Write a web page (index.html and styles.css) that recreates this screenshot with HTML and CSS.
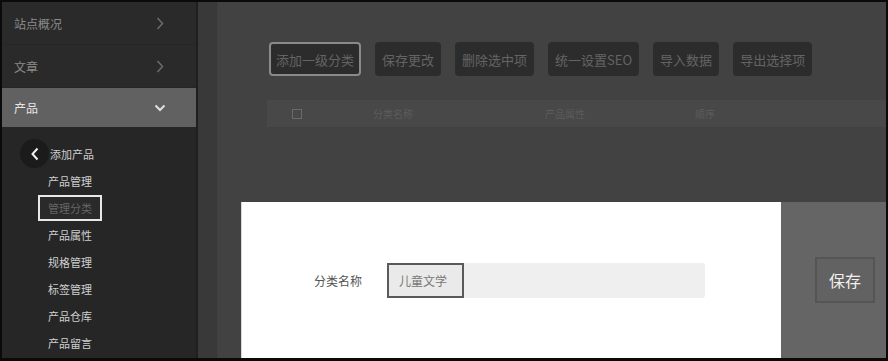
FILE: index.html
```html
<!DOCTYPE html>
<html lang="zh-CN">
<head>
    <meta charset="UTF-8">
    <title>管理分类</title>
    <link rel="stylesheet" href="styles.css">
</head>
<body>
    <div class="frame">
        <div class="sidebar">
            <div class="nav-item">
                <span>站点概况</span>
                <svg class="nav-arrow" width="8" height="13" viewBox="0 0 8 13">
                    <path d="M1.5 1 L6.5 6.5 L1.5 12" fill="none" stroke="#6c6c6c" stroke-width="1.5"/>
                </svg>
            </div>
            <div class="nav-item">
                <span>文章</span>
                <svg class="nav-arrow" width="8" height="13" viewBox="0 0 8 13">
                    <path d="M1.5 1 L6.5 6.5 L1.5 12" fill="none" stroke="#6c6c6c" stroke-width="1.5"/>
                </svg>
            </div>
            <div class="nav-item active">
                <span>产品</span>
                <svg class="nav-caret" width="12" height="8" viewBox="0 0 12 8">
                    <path d="M1.5 1.5 L6 6 L10.5 1.5" fill="none" stroke="#e0e0e0" stroke-width="2"/>
                </svg>
            </div>
            <div class="sub-menu">
                <div class="sub-item first">
                    <span class="back-btn">
                        <svg width="10" height="14" viewBox="0 0 10 14">
                            <path d="M7.5 1.5 L2.5 7 L7.5 12.5" fill="none" stroke="#f0f0f0" stroke-width="2"/>
                        </svg>
                    </span>
                    <span>添加产品</span>
                </div>
                <div class="sub-item">产品管理</div>
                <div class="sub-item"><span class="current">管理分类</span></div>
                <div class="sub-item">产品属性</div>
                <div class="sub-item">规格管理</div>
                <div class="sub-item">标签管理</div>
                <div class="sub-item">产品仓库</div>
                <div class="sub-item">产品留言</div>
            </div>
        </div>
        <div class="strip"></div>
        <div class="main">
            <div class="toolbar">
                <button class="tool-btn outlined">添加一级分类</button>
                <button class="tool-btn">保存更改</button>
                <button class="tool-btn">删除选中项</button>
                <button class="tool-btn">统一设置SEO</button>
                <button class="tool-btn">导入数据</button>
                <button class="tool-btn">导出选择项</button>
            </div>
            <div class="table-head">
                <span class="col-check"><span class="checkbox"></span></span>
                <span class="col-name">分类名称</span>
                <span class="col-attr">产品属性</span>
                <span class="col-order">顺序</span>
            </div>

            <!-- 弹出的编辑面板 -->
            <div class="edit-panel">
                <div class="edit-body">
                    <span class="field-label">分类名称</span>
                    <div class="field-input">
                        <span class="field-value">儿童文学</span>
                    </div>
                </div>
                <div class="edit-side">
                    <button class="save-btn">保存</button>
                </div>
            </div>
        </div>
    </div>
</body>
</html>
```

FILE: styles.css
```css
* {
    box-sizing: border-box;
}
body {
    margin: 0;
    background: #000;
    font-family: "Noto Sans CJK SC", "Noto Sans", sans-serif;
}
.frame {
    width: 888px;
    height: 361px;
    border: 2px solid #0a0a0a;
    border-bottom-width: 3px;
    display: flex;
    overflow: hidden;
    background: #424242;
}
.sidebar {
    width: 196px;
    background: #2a2a2a;
    border-right: 2px solid #1f1f1f;
    display: flex;
    flex-direction: column;
}
.nav-item {
    height: 43px;
    padding: 0 32px 0 12px;
    display: flex;
    align-items: center;
    justify-content: space-between;
    font-size: 12px;
    color: #8a8a8a;
    border-bottom: 1px solid #262626;
}
.nav-item.active {
    background: #616161;
    color: #e6e6e6;
    height: 40px;
    padding-right: 30px;
}
.sub-menu {
    padding-top: 12px;
    background: #262626;
    flex: 1;
}
.sub-item {
    height: 27px;
    padding-left: 46px;
    display: flex;
    align-items: center;
    font-size: 11px;
    color: #cfcfcf;
}
.sub-item.first {
    padding-left: 18px;
    gap: 1px;
}
.back-btn {
    width: 29px;
    height: 29px;
    border-radius: 50%;
    background: #1b1b1b;
    display: flex;
    align-items: center;
    justify-content: center;
}
.current {
    color: #666;
    border: 2px solid #e8e8e8;
    padding: 3px 8px;
    margin-left: -10px;
    background: #2a2a2a;
}
.strip {
    width: 20px;
    background: #393939;
    border-right: 1px solid #3f3f3f;
}
.main {
    flex: 1;
    position: relative;
    padding: 40px 0 0 51px;
}
.toolbar {
    display: flex;
    gap: 14px;
}
.tool-btn {
    height: 34px;
    padding: 0 7px;
    background: #2c2c2c;
    border: none;
    border-radius: 4px;
    font-family: inherit;
    font-size: 13px;
    color: #646464;
}
.tool-btn.outlined {
    border: 2px solid #8a8a8a;
    padding: 0 5px;
}
.table-head {
    margin-top: 24px;
    margin-left: -2px;
    height: 27px;
    background: #484848;
    display: flex;
    align-items: center;
    font-size: 10px;
    color: #5c5c5c;
}
.col-check {
    width: 106px;
    padding-left: 25px;
    display: flex;
}
.checkbox {
    width: 10px;
    height: 10px;
    border: 1px solid #6a6a6a;
}
.col-name {
    width: 172px;
}
.col-attr {
    width: 150px;
}
.edit-panel {
    position: absolute;
    left: 23px;
    right: 0;
    bottom: 0;
    height: 156px;
    display: flex;
}
.edit-body {
    width: 540px;
    background: #fff;
    display: flex;
    align-items: center;
    padding-left: 72px;
    border-left: 1px solid #d8d8d8;
}
.field-label {
    font-size: 12px;
    color: #555;
    width: 73px;
}
.field-input {
    width: 318px;
    height: 35px;
    background: #efefef;
    border-radius: 3px;
    display: flex;
}
.field-value {
    width: 77px;
    border: 2px solid #5a5a5a;
    display: flex;
    align-items: center;
    padding-left: 10px;
    font-size: 12px;
    color: #777;
    background: #eaeaea;
}
.edit-side {
    flex: 1;
    background: #656565;
    display: flex;
    align-items: center;
    padding-left: 34px;
}
.save-btn {
    width: 60px;
    height: 46px;
    background: #626262;
    border: 2px solid #555;
    font-family: inherit;
    font-size: 16px;
    color: #f0f0f0;
}
```
